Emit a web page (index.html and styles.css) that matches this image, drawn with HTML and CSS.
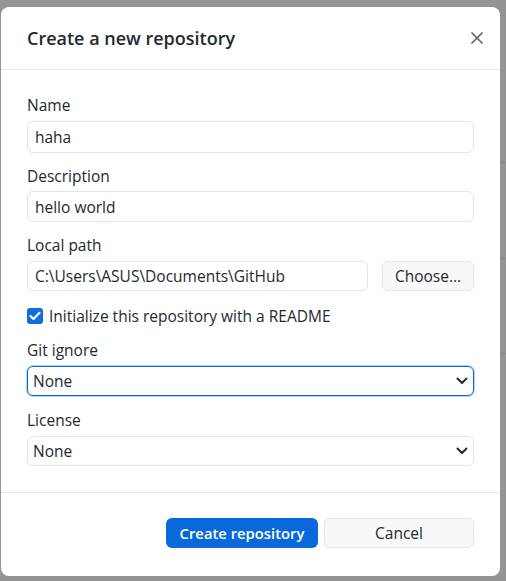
FILE: index.html
```html
<!DOCTYPE html>
<html>
<head>
<meta charset="utf-8">
<link rel="stylesheet" href="styles.css">
</head>
<body>
<div class="dialog">
  <div class="header">
    <h1 class="title">Create a new repository</h1>
    <svg class="close" width="12" height="12" viewBox="0 0 12 12"><path d="M1 1 L11 11 M11 1 L1 11" stroke="#5f6670" stroke-width="1.7" stroke-linecap="round"/></svg>
  </div>
  <div class="body">
    <div class="field f-name">
      <label class="label">Name</label>
      <div class="input h32">haha</div>
    </div>
    <div class="field f-desc">
      <label class="label">Description</label>
      <div class="input h31">hello world</div>
    </div>
    <div class="field f-path">
      <label class="label">Local path</label>
      <div class="row">
        <div class="input h30 grow">C:\Users\ASUS\Documents\GitHub</div>
        <div class="btn choose">Choose...</div>
      </div>
    </div>
    <div class="check">
      <span class="box"><svg width="12" height="10" viewBox="0 0 12 10"><path d="M1.5 5 L4.5 8 L10.5 1.8" fill="none" stroke="#fff" stroke-width="2.2" stroke-linecap="round" stroke-linejoin="round"/></svg></span>
      <span class="check-label">Initialize this repository with a README</span>
    </div>
    <div class="field f-git">
      <label class="label">Git ignore</label>
      <div class="input h30 select focused"><span>None</span><svg class="chev" width="12" height="8" viewBox="0 0 12 8"><path d="M1.5 1.5 L6 6 L10.5 1.5" fill="none" stroke="#24292e" stroke-width="2" stroke-linecap="round" stroke-linejoin="round"/></svg></div>
    </div>
    <div class="field f-lic">
      <label class="label">License</label>
      <div class="input h30 select"><span>None</span><svg class="chev" width="12" height="8" viewBox="0 0 12 8"><path d="M1.5 1.5 L6 6 L10.5 1.5" fill="none" stroke="#24292e" stroke-width="2" stroke-linecap="round" stroke-linejoin="round"/></svg></div>
    </div>
  </div>
  <div class="footer">
    <div class="btn primary">Create repository</div>
    <div class="btn cancel">Cancel</div>
  </div>
</div>
</body>
</html>
```

FILE: styles.css
```css
html, body {
  margin: 0;
  padding: 0;
}
body {
  width: 506px;
  height: 581px;
  overflow: hidden;
  background-color: #949494;
  background-image:
    linear-gradient(#8a8a8a, #8a8a8a),
    linear-gradient(#8a8a8a, #8a8a8a),
    linear-gradient(#8a8a8a, #8a8a8a);
  background-size: 6px 1px;
  background-repeat: no-repeat;
  background-position: 500px 162px, 500px 258px, 500px 353px;
  font-family: "Open Sans", "Noto Sans", sans-serif;
  font-size: 15.5px;
  color: #24292e;
  padding-top: 7px;
  padding-left: 1px;
  box-sizing: border-box;
}
.dialog {
  width: 499px;
  height: 569px;
  background: #fff;
  border-radius: 8px;
  display: flex;
  flex-direction: column;
  box-sizing: border-box;
}
.header {
  height: 63px;
  flex: none;
  display: flex;
  align-items: center;
  justify-content: space-between;
  padding: 0 17px 1px 26px;
  border-bottom: 1px solid #e1e4e8;
  box-sizing: border-box;
}
.title {
  margin: 0;
  font-size: 18px;
  font-weight: 600;
  color: #24292e;
}
.close {
  display: block;
}
.body {
  padding: 25px 26px 0 26px;
  height: 423px;
  flex: none;
  box-sizing: border-box;
  border-bottom: 1px solid #e1e4e8;
}
.field {
  display: flex;
  flex-direction: column;
}
.f-name, .f-desc {
  margin-bottom: 13px;
}
.f-git {
  margin-bottom: 14px;
}
.label {
  line-height: 20px;
  margin-bottom: 6px;
}
.f-desc .label {
  margin-bottom: 5px;
}
.input {
  box-sizing: border-box;
  border: 1px solid #e1e4e8;
  border-radius: 6px;
  padding: 0 7px;
  display: flex;
  align-items: center;
  line-height: 20px;
}
.h32 { height: 32px; }
.h31 { height: 31px; }
.h30 { height: 30px; }
.row {
  display: flex;
  gap: 14px;
}
.grow {
  flex: 1;
}
.btn {
  height: 30px;
  box-sizing: border-box;
  border-radius: 6px;
  display: flex;
  align-items: center;
  justify-content: center;
}
.choose {
  width: 92px;
  background: #f6f8fa;
  border: 1px solid #e1e4e8;
}
.check {
  display: flex;
  align-items: center;
  gap: 6px;
  height: 24px;
  margin: 13px 0 12px;
}
.box {
  width: 16px;
  height: 16px;
  border-radius: 3px;
  background: #0b6fdd;
  display: flex;
  align-items: center;
  justify-content: center;
}
.select {
  justify-content: space-between;
  padding: 0 5px;
}
.focused {
  border: 1px solid #0969da;
  box-shadow: 0 0 0 1px rgba(9, 105, 218, 0.3);
}
.chev {
  display: block;
}
.footer {
  flex: 1;
  display: flex;
  justify-content: flex-end;
  align-items: flex-start;
  gap: 6px;
  padding: 25px 26px 0 0;
  box-sizing: border-box;
}
.primary {
  width: 152px;
  background: #0969da;
  color: #fff;
  font-weight: 600;
  font-size: 14.8px;
}
.cancel {
  width: 150px;
  background: #f6f8fa;
  border: 1px solid #e1e4e8;
}
```
